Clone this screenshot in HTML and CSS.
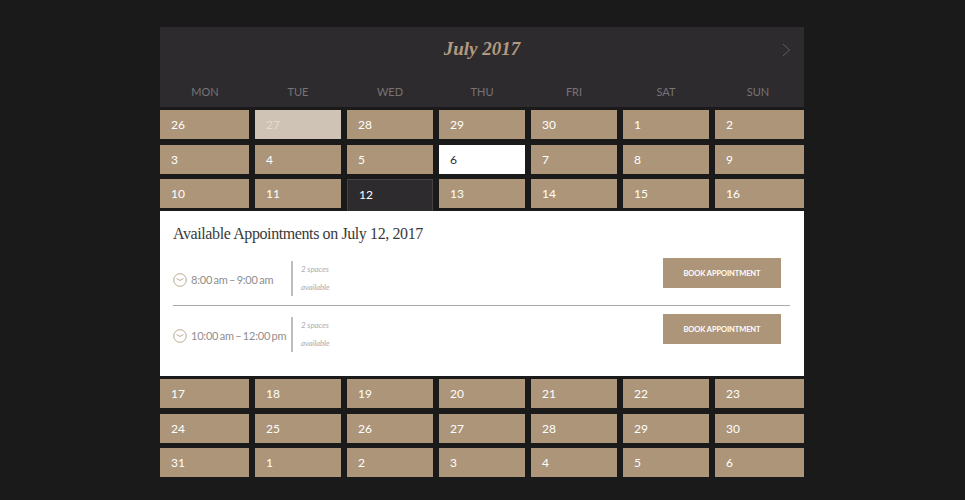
FILE: index.html
```html
<!DOCTYPE html>
<html lang="en">
<head>
  <meta charset="UTF-8" />
  <meta name="viewport" content="width=device-width, initial-scale=1.0" />
  <title>July 2017 - Appointments</title>
  <link rel="stylesheet" href="styles.css">
</head>
<body>
  <div class="calendar">
    <header class="cal-head">
      <div class="month-bar">
        <h2>July 2017</h2>
        <a class="next" href="#" aria-label="Next month">
          <svg width="9" height="14" viewBox="0 0 9 14"><path d="M1 1l6.5 6L1 13" fill="none" stroke="#615e60" stroke-width="1"/></svg>
        </a>
      </div>
      <div class="weekdays">
        <span>Mon</span><span>Tue</span><span>Wed</span><span>Thu</span><span>Fri</span><span>Sat</span><span>Sun</span>
      </div>
    </header>
    <div class="days">
      <a class="day">26</a><a class="day faded">27</a><a class="day">28</a><a class="day">29</a><a class="day">30</a><a class="day">1</a><a class="day">2</a>
      <a class="day">3</a><a class="day">4</a><a class="day">5</a><a class="day today">6</a><a class="day">7</a><a class="day">8</a><a class="day">9</a>
      <a class="day">10</a><a class="day">11</a><a class="day selected">12</a><a class="day">13</a><a class="day">14</a><a class="day">15</a><a class="day">16</a>

      <section class="panel">
        <h3>Available Appointments on July 12, 2017</h3>
        <div class="slot">
          <div class="time">
            <svg class="clock" width="14" height="14" viewBox="0 0 14 14"><circle cx="7" cy="7" r="6.3" fill="none" stroke="#bda98f"/><path d="M3.5 5.5L7 7.5l3.5-2" fill="none" stroke="#bda98f"/></svg>
            8:00 am – 9:00 am
          </div>
          <div class="spaces"><span>2 spaces</span><span>available</span></div>
          <a class="btn" href="#">Book Appointment</a>
        </div>
        <div class="slot">
          <div class="time">
            <svg class="clock" width="14" height="14" viewBox="0 0 14 14"><circle cx="7" cy="7" r="6.3" fill="none" stroke="#bda98f"/><path d="M3.5 5.5L7 7.5l3.5-2" fill="none" stroke="#bda98f"/></svg>
            10:00 am – 12:00 pm
          </div>
          <div class="spaces"><span>2 spaces</span><span>available</span></div>
          <a class="btn" href="#">Book Appointment</a>
        </div>
      </section>

      <a class="day">17</a><a class="day">18</a><a class="day">19</a><a class="day">20</a><a class="day">21</a><a class="day">22</a><a class="day">23</a>
      <a class="day">24</a><a class="day">25</a><a class="day">26</a><a class="day">27</a><a class="day">28</a><a class="day">29</a><a class="day">30</a>
      <a class="day">31</a><a class="day">1</a><a class="day">2</a><a class="day">3</a><a class="day">4</a><a class="day">5</a><a class="day">6</a>
    </div>
  </div>
</body>
</html>
```

FILE: styles.css
```css
* {
  margin: 0;
  padding: 0;
  box-sizing: border-box;
}
body {
  background-color: #1a1a1a;
  color: #fff;
  font-family: 'Lato', sans-serif;
  overflow: hidden;
}
.calendar {
  width: 644px;
  margin: 27px 0 23px 160px;
}
.cal-head {
  background-color: #2e2b2f;
  height: 80px;
  margin-bottom: 3px;
}
.month-bar {
  height: 44px;
  display: flex;
  align-items: center;
  justify-content: center;
  position: relative;
}
.month-bar h2 {
  font-family: 'Liberation Serif', serif;
  font-style: italic;
  font-weight: 700;
  font-size: 19px;
  color: #b29a7f;
}
.next {
  position: absolute;
  right: 13px;
  top: 16px;
  line-height: 0;
}
.weekdays,
.days {
  display: grid;
  grid-template-columns: 89px repeat(5, 86px) 89px;
  column-gap: 6px;
}
.weekdays {
  height: 36px;
  padding-top: 4px;
  align-items: center;
  text-align: center;
  font-size: 11px;
  color: #767476;
  text-transform: uppercase;
}
.weekdays span:first-child {
  padding-left: 1px;
}
.weekdays span:last-child {
  padding-right: 3px;
}
.days {
  row-gap: 5.5px;
}
.day {
  height: 29px;
  padding-left: 11px;
  display: flex;
  align-items: center;
  background-color: #ad9579;
  font-size: 12px;
  cursor: pointer;
}
.day.faded {
  background-color: #cfc3b5;
  color: #e3dcd3;
}
.day.today {
  background-color: #fff;
  color: #2e2b2f;
}
.day.selected {
  background-color: #2e2b2f;
  border: 1px solid #444245;
  border-bottom: none;
  height: 32px;
  margin-bottom: -3px;
  padding-left: 11px;
  padding-bottom: 3px;
}
.panel {
  grid-column: 1 / -1;
  height: 165px;
  margin: -2.5px 0;
  background-color: #fff;
  padding: 12px 14px 0 13px;
}
.panel h3 {
  font-family: 'Liberation Serif', serif;
  font-weight: 400;
  font-size: 16px;
  line-height: 22px;
  letter-spacing: -0.4px;
  color: #3a3a3a;
  margin-bottom: 5px;
}
.slot {
  display: flex;
  align-items: flex-start;
  height: 56px;
  color: #8e8e8e;
}
.slot:first-of-type {
  border-bottom: 1px solid #aaa;
}
.time {
  flex: none;
  width: 118px;
  height: 35px;
  margin-top: 12px;
  display: flex;
  align-items: center;
  gap: 4px;
  font-size: 11px;
  letter-spacing: -0.2px;
  word-spacing: -1.2px;
  white-space: nowrap;
}
.clock {
  flex: none;
}
.spaces {
  border-left: 2px solid #bdbdbd;
  margin-top: 11px;
  padding-left: 8px;
  height: 35px;
  display: flex;
  flex-direction: column;
  font-size: 8px;
  line-height: 17.5px;
  letter-spacing: -0.1px;
  font-style: italic;
  color: #adadad;
}
.btn {
  margin: 8px 9px 0 auto;
  width: 118px;
  height: 30px;
  display: flex;
  align-items: center;
  justify-content: center;
  background-color: #ad9579;
  color: #fff;
  font-size: 7.5px;
  font-weight: 700;
  text-transform: uppercase;
  text-decoration: none;
  letter-spacing: -0.1px;
}
```
